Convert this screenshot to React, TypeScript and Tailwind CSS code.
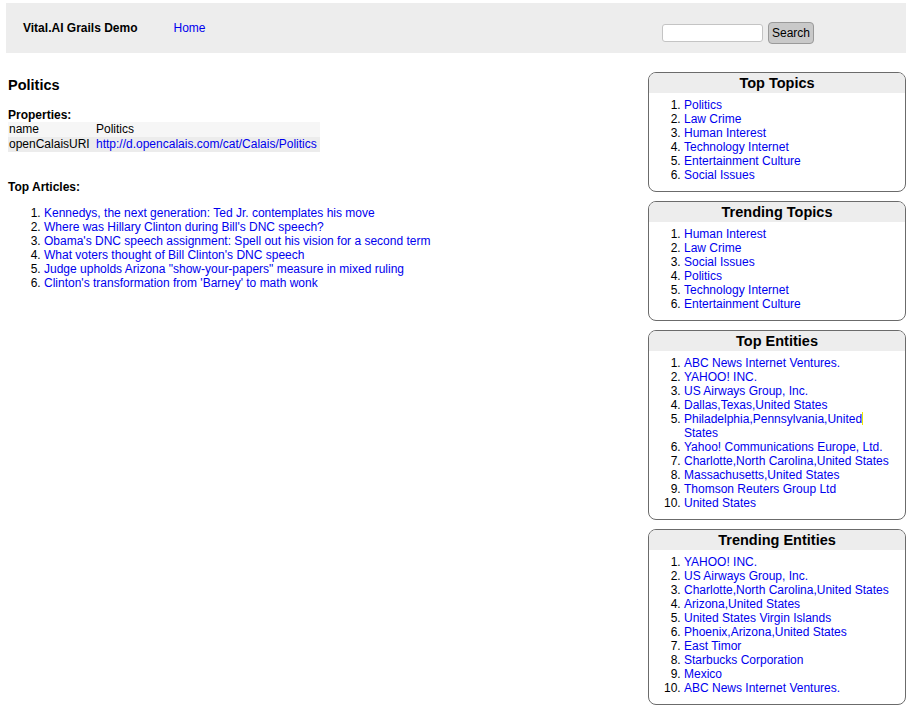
const topTopics = [
  "Politics",
  "Law Crime",
  "Human Interest",
  "Technology Internet",
  "Entertainment Culture",
  "Social Issues",
]

const trendingTopics = [
  "Human Interest",
  "Law Crime",
  "Social Issues",
  "Politics",
  "Technology Internet",
  "Entertainment Culture",
]

const topEntities = [
  "ABC News Internet Ventures.",
  "YAHOO! INC.",
  "US Airways Group, Inc.",
  "Dallas,Texas,United States",
  "Philadelphia,Pennsylvania,United States",
  "Yahoo! Communications Europe, Ltd.",
  "Charlotte,North Carolina,United States",
  "Massachusetts,United States",
  "Thomson Reuters Group Ltd",
  "United States",
]

const trendingEntities = [
  "YAHOO! INC.",
  "US Airways Group, Inc.",
  "Charlotte,North Carolina,United States",
  "Arizona,United States",
  "United States Virgin Islands",
  "Phoenix,Arizona,United States",
  "East Timor",
  "Starbucks Corporation",
  "Mexico",
  "ABC News Internet Ventures.",
]

const articles = [
  "Kennedys, the next generation: Ted Jr. contemplates his move",
  "Where was Hillary Clinton during Bill's DNC speech?",
  "Obama's DNC speech assignment: Spell out his vision for a second term",
  "What voters thought of Bill Clinton's DNC speech",
  "Judge upholds Arizona \"show-your-papers\" measure in mixed ruling",
  "Clinton's transformation from 'Barney' to math wonk",
]

function SideBox({ title, items }: { title: string; items: string[] }) {
  return (
    <div className="border border-[#6b6b6b] rounded-[8px] overflow-hidden bg-white">
      <div className="h-[20px] bg-[#ededed] text-center font-bold text-[14.5px] leading-[20px] text-black">
        {title}
      </div>
      <ol className="list-decimal pl-[35px] pr-[8px] pt-[5px] pb-[9px] text-[12px] leading-[14px]">
        {items.map((item) => (
          <li key={item}>
            {item === "Philadelphia,Pennsylvania,United States" ? (
              <a href="#" className="text-[#0000ee]">
                Philadelphia,Pennsylvania,United
                <span className="inline-block w-[1px] h-[13px] bg-[#f2e600] align-[-2px]" /> States
              </a>
            ) : (
              <a href="#" className="text-[#0000ee]">
                {item}
              </a>
            )}
          </li>
        ))}
      </ol>
    </div>
  )
}

export default function App() {
  return (
    <div className="min-h-[713px] bg-white text-black font-['Liberation_Sans',Arial,sans-serif]">
      {/* header bar */}
      <div className="ml-[6px] mr-[11px] pt-[3px]">
        <div className="h-[50px] bg-[#ededed] flex items-start pt-[18px] pl-[17px] pr-[92px]">
          <span className="font-bold text-[12px] leading-[14px]">Vital.AI Grails Demo</span>
          <a href="#" className="ml-[36px] text-[12px] leading-[14px] text-[#0000ee]">
            Home
          </a>
          <div className="ml-auto mt-[1px] flex items-center">
            <input
              type="text"
              className="w-[101px] h-[18px] bg-white border border-[#c4c4c4] rounded-[3px] outline-none"
            />
            <button className="ml-[5px] w-[46px] h-[22px] bg-[#c9c9c9] border border-[#9a9a9a] rounded-[4px] text-[12px] leading-[14px] text-black">
              Search
            </button>
          </div>
        </div>
      </div>

      <div className="flex items-start">
        {/* main column */}
        <div className="flex-1 pl-[8px] pt-[24px]">
          <h1 className="font-bold text-[14.5px] leading-[17px]">Politics</h1>
          <div className="mt-[14px] font-bold text-[12px] leading-[14px]">Properties:</div>
          <div className="w-[312px] text-[12px] leading-[15px]">
            <div className="flex bg-[#f6f6f6]">
              <div className="w-[87px] pl-[1px]">name</div>
              <div className="pl-[1px]">Politics</div>
            </div>
            <div className="flex bg-[#ececec]">
              <div className="w-[87px] pl-[1px]">openCalaisURI</div>
              <a href="#" className="pl-[1px] text-[#0000ee]">
                http://d.opencalais.com/cat/Calais/Politics
              </a>
            </div>
          </div>
          <div className="mt-[28px] font-bold text-[12px] leading-[14px]">Top Articles:</div>
          <ol className="mt-[12px] list-decimal pl-[36px] text-[12px] leading-[14px]">
            {articles.map((a) => (
              <li key={a}>
                <a href="#" className="text-[#0000ee]">
                  {a}
                </a>
              </li>
            ))}
          </ol>
        </div>

        {/* sidebar */}
        <div className="w-[258px] mr-[11px] pt-[19px] flex flex-col gap-[9px] pb-[8px]">
          <SideBox title="Top Topics" items={topTopics} />
          <SideBox title="Trending Topics" items={trendingTopics} />
          <SideBox title="Top Entities" items={topEntities} />
          <SideBox title="Trending Entities" items={trendingEntities} />
        </div>
      </div>
    </div>
  )
}
